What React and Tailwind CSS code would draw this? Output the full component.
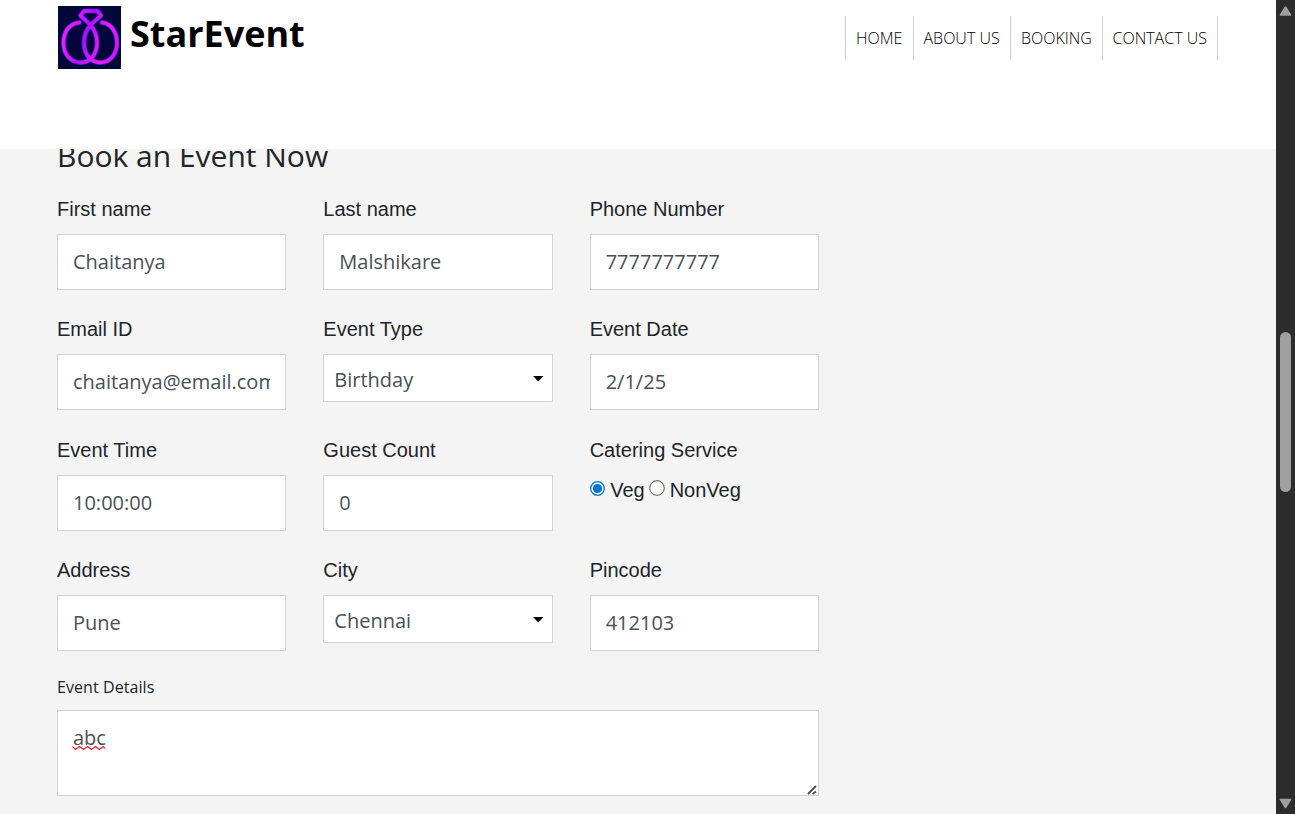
import React from "react";

const labelClass =
  "block h-[30px] whitespace-nowrap font-['Liberation_Sans',Arial,sans-serif] text-[20px] leading-[30px] text-[#212529]";
const controlClass =
  "block w-full rounded-none border border-[#ced4da] bg-white font-['Open_Sans',sans-serif] text-[20px] text-[#495057] outline-none";

function Field({ label, children }) {
  return (
    <div className="flex min-w-0 flex-col gap-[10px]">
      <label className={labelClass}>{label}</label>
      {children}
    </div>
  );
}

function TextField({ label, value }) {
  return (
    <Field label={label}>
      <input
        type="text"
        defaultValue={value}
        spellCheck={false}
        className={`${controlClass} h-14 px-[15px] pb-[1px]`}
      />
    </Field>
  );
}

function SelectField({ label, value }) {
  return (
    <Field label={label}>
      <div className="relative">
        <select defaultValue={value} className={`${controlClass} h-12 appearance-none pt-[3px] pr-8 pl-[10px]`}>
          <option>{value}</option>
        </select>
        <svg className="pointer-events-none absolute top-[22px] right-[9px]" width="11" height="6" viewBox="0 0 11 6">
          <path d="M0 0H10.500L5.250 5.500Z" fill="#000" />
        </svg>
      </div>
    </Field>
  );
}

function Radio({ checked }) {
  return checked ? (
    <svg width="15" height="15" viewBox="0 0 15 15">
      <circle cx="7.5" cy="7.5" r="6.8" fill="#fff" stroke="#0075d7" strokeWidth="1.3" />
      <circle cx="7.5" cy="7.5" r="4.6" fill="#0075d7" />
    </svg>
  ) : (
    <svg width="16" height="16" viewBox="0 0 16 16">
      <circle cx="8" cy="8" r="7.3" fill="#fff" stroke="#767676" strokeWidth="1.2" />
    </svg>
  );
}

const RINGS =
  "M21.500 16.500C11 17.500 5.500 26 5.500 37C5.500 48 12.500 56.500 22.500 56.500C32.500 56.500 39 48 39 37C39 29 36.500 23.500 32 18.500L22.500 9.500L26 5H39.500L43 9.500L33 18.500C28.500 23.500 26 29.500 26 37C26 48 32.500 56.500 42.500 56.500C52 56.500 59 48 59 37C59 26 53 17.500 44 16.500";

function Logo() {
  return (
    <svg width="63" height="63" viewBox="0 0 63 63" className="block">
      <defs>
        <linearGradient id="neon" gradientUnits="userSpaceOnUse" x1="4" x2="24" y1="36" y2="42" spreadMethod="reflect">
          <stop offset="0" stopColor="#f21df0" />
          <stop offset="0.6" stopColor="#d018f0" />
          <stop offset="1" stopColor="#a514f2" />
        </linearGradient>
        <radialGradient id="night">
          <stop offset="0" stopColor="#050040" />
          <stop offset="1" stopColor="#000838" />
        </radialGradient>
      </defs>
      <rect width="63" height="63" fill="url(#night)" />
      <g fill="none" strokeLinecap="round" strokeLinejoin="round">
        <path d={RINGS} stroke="#4a12dc" strokeWidth="5" />
        <path d={RINGS} stroke="url(#neon)" strokeWidth="3.400" />
      </g>
    </svg>
  );
}

function Header() {
  return (
    <header className="relative flex h-[149px] shrink-0 items-start justify-between bg-white pr-[58px] pl-[58px]">
      <div className="flex gap-[9px] pt-[6px]">
        <Logo />
        <span className="font-['Open_Sans',sans-serif] text-[36px] leading-[56px] font-bold text-black">StarEvent</span>
      </div>
      <nav className="mt-4 flex h-11 border-l border-[#ccc] font-['Open_Sans',sans-serif] text-[16px] leading-[44px] font-light whitespace-nowrap text-black">
        <a className="w-[68px] border-r border-[#ccc] pl-[10px]">HOME</a>
        <a className="w-[97px] border-r border-[#ccc] pl-[9.500px]">ABOUT US</a>
        <a className="w-[92px] border-r border-[#ccc] pl-[10px]">BOOKING</a>
        <a className="w-[115px] border-r border-[#ccc] pl-[9.500px]">CONTACT US</a>
      </nav>
    </header>
  );
}

function Scrollbar() {
  return (
    <aside className="flex w-[19px] shrink-0 flex-col items-center bg-[#2c2c2c]">
      <svg width="13" height="10" viewBox="0 0 13 10" className="mt-[6px]">
        <path d="M6.500 1L11.500 9H1.500Z" fill="#9f9f9f" stroke="#9f9f9f" strokeWidth="1.600" strokeLinejoin="round" />
      </svg>
      <div className="mt-[316px] h-[160px] w-[11px] rounded-full bg-[#9f9f9f]" />
      <svg width="13" height="11" viewBox="0 0 13 11" className="mt-auto mb-[5px]">
        <path d="M6.500 9.500L11.500 1.500H1.500Z" fill="#9f9f9f" stroke="#9f9f9f" strokeWidth="1.600" strokeLinejoin="round" />
      </svg>
    </aside>
  );
}

export default function App() {
  return (
    <div className="flex h-[814px] w-[1295px] overflow-hidden bg-[#f4f4f4]">
      <div className="flex min-w-0 flex-1 flex-col">
        <Header />
        <main className="flex-1 overflow-hidden pl-[57px]">
          <h2 className="-mt-[13px] h-[40px] font-['Open_Sans',sans-serif] text-[30px] leading-[40px] whitespace-nowrap text-[#212529]">
            Book an Event Now
          </h2>
          <form className="mt-[18px] w-[762px]">
            <div className="grid auto-rows-[96px] grid-cols-3 gap-x-[37px] gap-y-[24.400px]">
              <TextField label="First name" value="Chaitanya" />
              <TextField label="Last name" value="Malshikare" />
              <TextField label="Phone Number" value="7777777777" />
              <TextField label="Email ID" value="chaitanya@email.com" />
              <SelectField label="Event Type" value="Birthday" />
              <TextField label="Event Date" value="2/1/25" />
              <TextField label="Event Time" value="10:00:00" />
              <TextField label="Guest Count" value="0" />
              <Field label="Catering Service">
                <div className="flex h-[30px] font-['Liberation_Sans',Arial,sans-serif] text-[20px] leading-[30px] text-[#212529]">
                  <span className="mt-[6px] w-[20.500px]"><Radio checked /></span>
                  <span className="w-[38.500px]">Veg</span>
                  <span className="mt-[5px] w-[21px]"><Radio /></span>
                  <span>NonVeg</span>
                </div>
              </Field>
              <TextField label="Address" value="Pune" />
              <SelectField label="City" value="Chennai" />
              <TextField label="Pincode" value="412103" />
            </div>
            <label className="mt-[24px] block h-[24px] font-['Open_Sans',sans-serif] text-[16px] leading-[24px] tracking-[0.07px] text-[#212529]">
              Event Details
            </label>
            <div className="relative mt-[11px]">
              <textarea
                defaultValue="abc"
                spellCheck={false}
                className={`${controlClass} h-[86px] resize-none px-[15px] py-[12px] leading-[29px]`}
              />
              <svg className="absolute top-[35px] left-[15px]" width="34" height="6" viewBox="0 0 34 6">
                <path
                  d="M0.500 1.500L3.500 4.500L7.500 1.500L11.500 4.500L15.500 1.500L19.500 4.500L23.500 1.500L27.500 4.500L31 1.500L33 3.500"
                  fill="none"
                  stroke="#f02020"
                  strokeWidth="1.200"
                />
              </svg>
              <svg className="absolute right-[2px] bottom-[1px]" width="10" height="10" viewBox="0 0 10 10">
                <path d="M1 9L9 1M5.500 9L9 6.500" fill="none" stroke="#4d4d4d" strokeWidth="1.900" />
              </svg>
            </div>
          </form>
        </main>
      </div>
      <Scrollbar />
    </div>
  );
}
